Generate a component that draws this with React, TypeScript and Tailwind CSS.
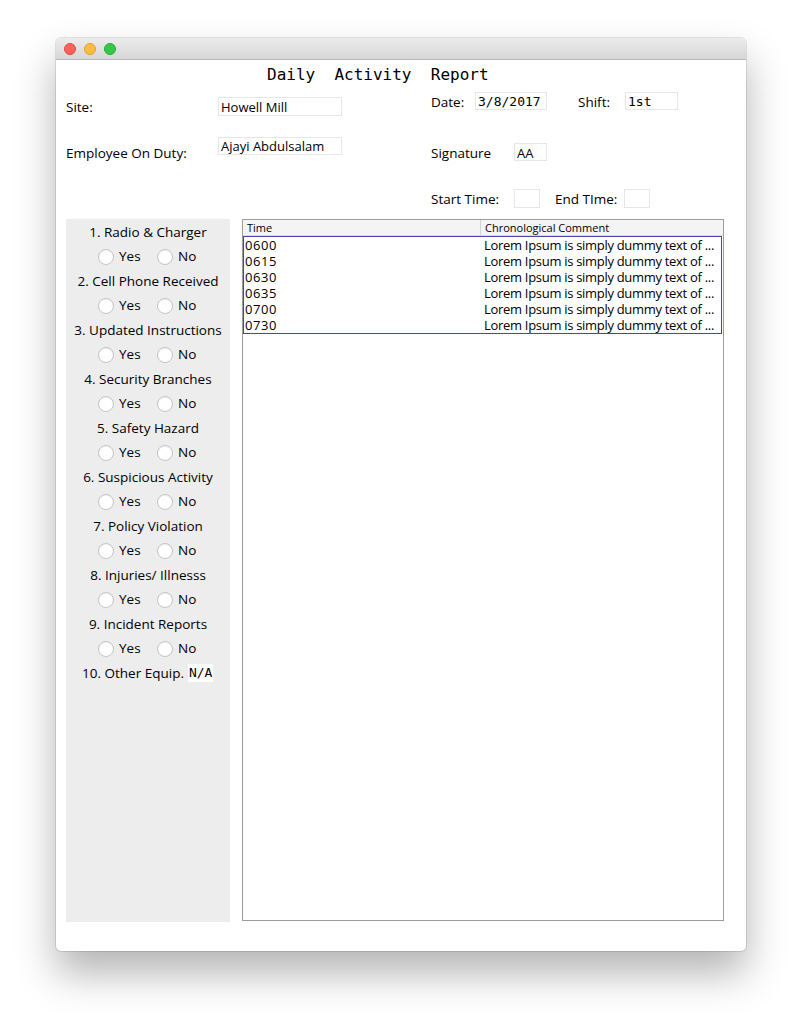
import React from 'react';

const questions = [
  '1. Radio & Charger',
  '2. Cell Phone Received',
  '3. Updated Instructions',
  '4. Security Branches',
  '5. Safety Hazard',
  '6. Suspicious Activity',
  '7. Policy Violation',
  '8. Injuries/ Illnesss',
  '9. Incident Reports',
];

const entries = ['0600', '0615', '0630', '0635', '0700', '0730'];

const Radio: React.FC = () => (
  <span className="inline-block shrink-0 w-[16px] h-[16px] rounded-full bg-white border border-[#c4c4c4] shadow-[inset_0_1px_1px_rgba(0,0,0,0.06)]" />
);

const Field: React.FC<{ className?: string; mono?: boolean; children?: React.ReactNode }> = ({ className = '', mono, children }) => (
  <div
    className={`bg-white border border-[#e6e6e6] px-[2px] text-[13px] leading-[17px] text-black ${mono ? 'font-["DejaVu_Sans_Mono",monospace]' : ''} ${className}`}
  >
    {children}
  </div>
);

export default function App() {
  return (
    <div className="w-[802px] h-[1026px] bg-white pt-[38px] pl-[56px] font-['Open_Sans',sans-serif] text-[13.5px] text-black">
      <div className="w-[690px] h-[913px] bg-white rounded-[5px] overflow-hidden flex flex-col shadow-[0_0_0_1px_rgba(0,0,0,0.1),0_22px_40px_rgba(0,0,0,0.3)]">
        {/* title bar */}
        <div className="h-[22px] shrink-0 bg-gradient-to-b from-[#ececec] to-[#d6d6d6] border-b border-[#b9b9b9] flex items-center pl-[8px] gap-[8px]">
          <span className="w-[12px] h-[12px] rounded-full bg-[#fc605c] border border-[#de4a44]" />
          <span className="w-[12px] h-[12px] rounded-full bg-[#fdbc40] border border-[#dea034]" />
          <span className="w-[12px] h-[12px] rounded-full bg-[#34c84a] border border-[#27aa35]" />
        </div>

        <div className="flex-1 flex flex-col px-[10px]">
          {/* heading */}
          <div className="h-[24px] pt-[5px] pl-[201px] font-['DejaVu_Sans_Mono',monospace] text-[16px] leading-[20px] whitespace-pre">
            Daily  Activity  Report
          </div>

          {/* header fields */}
          <div className="flex h-[135px]">
            <div className="w-[365px]">
              <div className="flex">
                <div className="w-[152px] mt-[13px] leading-[20px]">Site:</div>
                <Field className="mt-[13px] w-[124px] h-[19px] pt-[1px]">Howell Mill</Field>
              </div>
              <div className="flex">
                <div className="w-[152px] mt-[26px] leading-[20px]">Employee On Duty:</div>
                <Field className="mt-[20px] w-[124px] h-[18px]">Ajayi Abdulsalam</Field>
              </div>
            </div>
            <div className="flex-1">
              <div className="flex mt-[8px]">
                <div className="w-[44px] leading-[20px]">Date:</div>
                <Field mono className="w-[72px] h-[18px]">3/8/2017</Field>
                <div className="ml-[31px] w-[47px] leading-[20px]">Shift:</div>
                <Field mono className="w-[53px] h-[18px]">1st</Field>
              </div>
              <div className="flex mt-[31px]">
                <div className="w-[83px] leading-[20px]">Signature</div>
                <Field className="w-[33px] h-[18px] pt-[1px]">AA</Field>
              </div>
              <div className="flex mt-[26px]">
                <div className="w-[83px] leading-[20px]">Start Time:</div>
                <Field className="w-[26px] h-[19px]" />
                <div className="ml-[15px] w-[69px] leading-[20px]">End TIme:</div>
                <Field className="w-[26px] h-[19px]" />
              </div>
            </div>
          </div>

          {/* body */}
          <div className="flex h-[703px] gap-[12px]">
            <div className="w-[164px] shrink-0 bg-[#ededed] pt-[1px]">
              {questions.map((q) => (
                <div key={q}>
                  <div className="h-[24px] flex items-center justify-center leading-[20px] whitespace-nowrap">{q}</div>
                  <div className="h-[25px] flex items-center justify-center">
                    <Radio />
                    <span className="ml-[5px] w-[38px]">Yes</span>
                    <Radio />
                    <span className="ml-[5px] w-[20px]">No</span>
                  </div>
                </div>
              ))}
              <div className="h-[24px] flex items-center pl-[16px] whitespace-nowrap">
                <span>10. Other Equip.</span>
                <span className="ml-[4px] bg-white px-[1px] font-['DejaVu_Sans_Mono',monospace] text-[13px] leading-[18px]">N/A</span>
              </div>
            </div>

            <div className="w-[482px] h-[702px] border border-[#9c9c9c] bg-white text-[13px]">
              <div className="flex h-[16px] bg-[#f4f4f4] border-b border-[#dcdcdc] text-[11px] leading-[15px]">
                <div className="w-[238px] shrink-0 pl-[4px] border-r border-[#d2d2d2]">Time</div>
                <div className="flex-1 pl-[4px]">Chronological Comment</div>
              </div>
              <div className="border border-[#4646a8] w-[479px]">
                {entries.map((t) => (
                  <div key={t} className="flex h-[16px] leading-[16px]">
                    <div className="w-[237px] shrink-0 pl-[1px] tracking-[0.6px]">{t}</div>
                    <div className="flex-1 min-w-0 overflow-hidden pl-[3px] whitespace-nowrap tracking-[-0.3px]">Lorem Ipsum is simply dummy text of ...</div>
                  </div>
                ))}
              </div>
            </div>
          </div>
        </div>
      </div>
    </div>
  );
}
